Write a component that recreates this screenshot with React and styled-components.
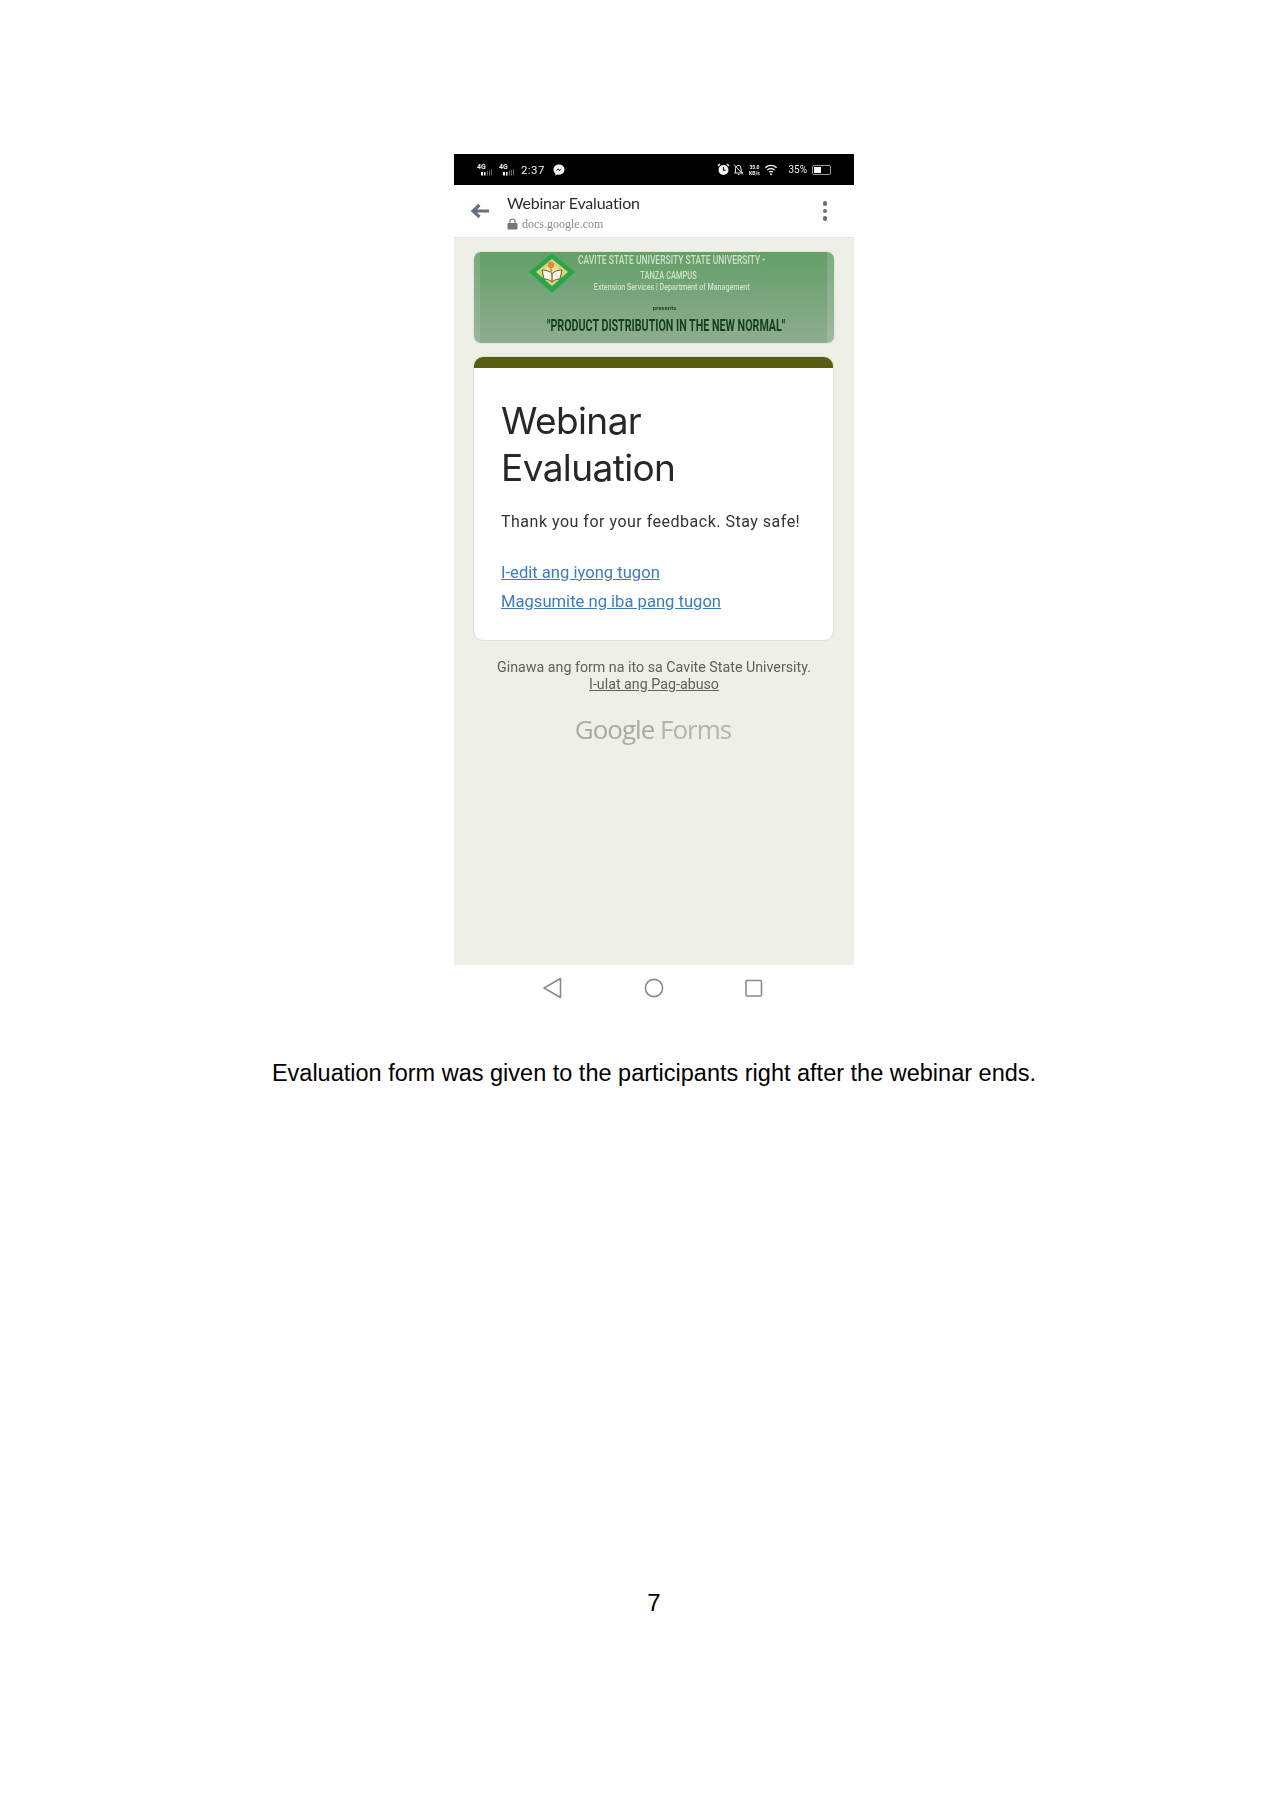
import styled, { createGlobalStyle } from "styled-components";

const GlobalStyle = createGlobalStyle`
  html, body {
    margin: 0;
    padding: 0;
    background: #fff;
  }
  * {
    box-sizing: border-box;
  }
`;

export default function App() {
  return (
    <Page>
      <GlobalStyle />
      <Phone>
        <StatusBar>
          <StatusGroup>
            <Signal />
            <Signal />
            <Clock>2:37</Clock>
            <MessengerIcon />
          </StatusGroup>
          <StatusGroupRight>
            <AlarmIcon />
            <BellOffIcon />
            <Speed>
              35.0
              <br />
              KB/s
            </Speed>
            <WifiIcon />
            <Percent>35%</Percent>
            <Battery>
              <BatteryFill />
            </Battery>
          </StatusGroupRight>
        </StatusBar>
        <AppBar>
          <BackIcon />
          <AppTitles>
            <AppTitle>Webinar Evaluation</AppTitle>
            <AppUrl>
              <LockIcon />
              docs.google.com
            </AppUrl>
          </AppTitles>
          <MenuDots>
            <Dot />
            <Dot />
            <Dot />
          </MenuDots>
        </AppBar>
        <Content>
          <Banner>
            <BannerLogo />
            <BannerLine1>CAVITE STATE UNIVERSITY STATE UNIVERSITY -</BannerLine1>
            <BannerLine2>TANZA CAMPUS</BannerLine2>
            <BannerLine3>Extension Services | Department of Management</BannerLine3>
            <BannerPresents>presents</BannerPresents>
            <BannerTitle>"PRODUCT DISTRIBUTION IN THE NEW NORMAL"</BannerTitle>
          </Banner>
          <Card>
            <CardTop />
            <CardBody>
              <Title>
                Webinar
                <br />
                Evaluation
              </Title>
              <Message>Thank you for your feedback. Stay safe!</Message>
              <CardLink>I-edit ang iyong tugon</CardLink>
              <CardLink>Magsumite ng iba pang tugon</CardLink>
            </CardBody>
          </Card>
          <Footer>
            <FooterText>Ginawa ang form na ito sa Cavite State University.</FooterText>
            <FooterLink>I-ulat ang Pag-abuso</FooterLink>
            <Brand>
              <BrandStrong>Google</BrandStrong> Forms
            </Brand>
          </Footer>
        </Content>
        <NavBar>
          <NavIcon viewBox="0 0 20 22">
            <path d="M16.5 1.500 L0 11 L16.500 20.500 Z" />
          </NavIcon>
          <NavIcon viewBox="0 0 20 22">
            <circle cx="10" cy="11" r="8.6" />
          </NavIcon>
          <NavIcon viewBox="0 0 20 22">
            <rect x="2" y="3.5" width="15.5" height="15.5" rx="1" />
          </NavIcon>
        </NavBar>
      </Phone>
      <Caption>Evaluation form was given to the participants right after the webinar ends.</Caption>
      <PageNumber>7</PageNumber>
    </Page>
  );
}

function Signal() {
  return (
    <svg width="18" height="14" viewBox="0 0 18 14">
      <text x="0" y="6" fontSize="7" fontWeight="700" fontFamily="Roboto, sans-serif" fill="#eee">
        4G
      </text>
      <rect x="4" y="9" width="2" height="3.5" fill="#fff" />
      <rect x="7" y="9" width="1.5" height="3.5" fill="#fff" />
      <rect x="10" y="8" width="1" height="4.5" fill="#666" />
      <rect x="12" y="7" width="1" height="5.5" fill="#666" />
      <rect x="14" y="6" width="1" height="6.5" fill="#666" />
    </svg>
  );
}

function MessengerIcon() {
  return (
    <svg width="12" height="12" viewBox="0 0 12 12" style={{ marginLeft: 4 }}>
      <path d="M6 .5C2.8.5.5 2.7.5 5.6c0 1.6.7 2.9 1.8 3.8v2l1.9-1c.6.2 1.2.3 1.8.3 3.2 0 5.5-2.2 5.5-5.1S9.200.5 6 .5z" fill="#f4f4f4" />
      <path d="M2.800 7 5 4.600l1.300 1.200 2.500-1.200-2.200 2.400-1.300-1.200z" fill="#111" />
    </svg>
  );
}

function AlarmIcon() {
  return (
    <svg width="13" height="13" viewBox="0 0 13 13">
      <circle cx="6.500" cy="7" r="5" fill="#f4f4f4" />
      <path d="M1 3 3 1M12 3l-2-2" stroke="#f4f4f4" strokeWidth="1.500" />
      <path d="M6.500 4v3.200h2.200" stroke="#111" strokeWidth="1.100" fill="none" />
    </svg>
  );
}

function BellOffIcon() {
  return (
    <svg width="11" height="13" viewBox="0 0 11 13" fill="none" stroke="#e8e8e8" strokeWidth="1">
      <path d="M2.500 9.500V5.500a3 3 0 0 1 5-2.300L8.500 8.500l1 1.500H1.500l1-1M5 11.500h1.500" />
      <path d="M1 1.500l9 10" />
    </svg>
  );
}

function WifiIcon() {
  return (
    <svg width="15" height="12" viewBox="0 0 14 12" fill="none" stroke="#f4f4f4" strokeWidth="1.400">
      <path d="M.8 3.800C4.200.8 8.800.8 12.200 3.800M2.800 6C5 4.200 8 4.200 10.200 6M4.700 8.100C5.800 7.200 7.200 7.200 8.300 8.100" />
      <circle cx="6.500" cy="10.300" r="1" fill="#f4f4f4" stroke="none" />
    </svg>
  );
}

function BackIcon() {
  return (
    <BackSvg width="20" height="16" viewBox="0 0 20 16" fill="none" stroke="#66717c" strokeWidth="3.200">
      <path d="M19 8H3M9.500 2 3 8l6.500 6" />
    </BackSvg>
  );
}

function LockIcon() {
  return (
    <svg width="11" height="12" viewBox="0 0 11 12">
      <path d="M3 5V3.500a2.500 2.500 0 0 1 5 0V5" fill="none" stroke="#777" strokeWidth="1.200" />
      <rect x=".5" y="5" width="10" height="6.500" rx="1" fill="#777" />
    </svg>
  );
}

function BannerLogo() {
  return (
    <LogoSvg width="48" height="42" viewBox="0 0 48 42">
      <path d="M24 1 47 20 24 41 1 20Z" fill="#2fa24e" stroke="#3fae5a" strokeWidth="1" />
      <path d="M24 7 40 20 24 34 8 20Z" fill="#d8d77a" />
      <path d="M24 11 34 20 24 29 14 20Z" fill="#e9e3a0" />
      <path d="M14 18c4 0 8 1 10 4 2-3 6-4 10-4l-2 9c-3 0-6 1-8 3-2-2-5-3-8-3z" fill="#f6f4e8" stroke="#6a5a28" strokeWidth="1" />
      <path d="M24 22v8" stroke="#6a5a28" strokeWidth="1.200" />
      <circle cx="23" cy="13" r="3.200" fill="#e28a2e" />
      <path d="M23 16v5" stroke="#d9a23a" strokeWidth="2" />
    </LogoSvg>
  );
}

const Page = styled.div`
  width: 1272px;
  height: 1800px;
  background: #fff;
  padding: 154px 0 0 36px;
  overflow: hidden;
  font-family: "Liberation Sans", Arial, sans-serif;
`;

const Phone = styled.div`
  width: 400px;
  margin: 0 auto;
  filter: blur(0.35px);
`;

const StatusBar = styled.div`
  height: 31px;
  background: #000;
  display: flex;
  align-items: center;
  justify-content: space-between;
  padding: 0 23px;
  color: #eee;
  font-family: Roboto, sans-serif;
`;

const StatusGroup = styled.div`
  display: flex;
  align-items: center;
  gap: 4px;
`;

const StatusGroupRight = styled(StatusGroup)`
  gap: 3px;
`;

const Clock = styled.span`
  font-size: 11.500px;
  letter-spacing: 0.4px;
`;

const Speed = styled.span`
  font-size: 5px;
  font-weight: 700;
  line-height: 6px;
  text-align: center;
  width: 14px;
`;

const Percent = styled.span`
  font-size: 10px;
  margin-left: 6px;
`;

const Battery = styled.div`
  width: 19px;
  height: 10px;
  border: 1px solid #999;
  border-radius: 2px;
  margin-left: 2px;
  padding: 1px;
`;

const BatteryFill = styled.div`
  width: 7px;
  height: 100%;
  background: #fff;
`;

const AppBar = styled.div`
  height: 53px;
  background: #fff;
  display: flex;
  align-items: center;
  padding: 0 27px 0 16px;
  border-bottom: 1px solid #e4e5dc;
`;

const BackSvg = styled.svg`
  margin-right: 17px;
  flex: none;
`;

const AppTitles = styled.div`
  flex: 1;
  display: flex;
  flex-direction: column;
  gap: 4px;
  padding-top: 2px;
`;

const AppTitle = styled.div`
  font-family: "Lato", sans-serif;
  font-size: 16px;
  line-height: 20px;
  color: #2b2b2b;
  letter-spacing: -0.2px;
`;

const AppUrl = styled.div`
  display: flex;
  align-items: center;
  gap: 4px;
  font-family: "Liberation Serif", serif;
  font-size: 12px;
  line-height: 14px;
  color: #8a8a8a;
`;

const MenuDots = styled.div`
  display: flex;
  flex-direction: column;
  gap: 3px;
`;

const Dot = styled.span`
  width: 4.500px;
  height: 4.500px;
  border-radius: 50%;
  background: #66717c;
`;

const Content = styled.div`
  height: 727px;
  background: #eeefe6;
  padding: 14px 20px 0;
`;

const Banner = styled.div`
  position: relative;
  height: 91px;
  border-radius: 7px;
  padding: 1px 0 0 41px;
  background:
    linear-gradient(90deg, rgba(255, 255, 255, 0.12) 0 6px, transparent 6px calc(100% - 7px), rgba(255, 255, 255, 0.15) calc(100% - 7px)),
    linear-gradient(180deg, #639f67, #8fac92);
  box-shadow: 0 0 2px rgba(0, 0, 0, 0.15);
  display: flex;
  flex-direction: column;
  align-items: center;
  font-family: Roboto, sans-serif;
`;

const LogoSvg = styled.svg`
  position: absolute;
  left: 54px;
  top: 0;
`;

const BannerLine = styled.div`
  white-space: nowrap;
  color: #cfe0cb;
`;

const BannerLine1 = styled(BannerLine)`
  font-size: 12.500px;
  font-weight: 500;
  line-height: 14px;
  transform: scaleX(0.68);
  margin-left: -5px;
`;

const BannerLine2 = styled(BannerLine)`
  font-size: 11px;
  font-weight: 500;
  line-height: 14px;
  transform: scaleX(0.68);
  margin: 2px 0 0 -12px;
`;

const BannerLine3 = styled(BannerLine)`
  font-size: 8.500px;
  font-weight: 500;
  line-height: 10px;
  transform: scaleX(0.84);
  margin: -1px 0 0 -5px;
`;

const BannerPresents = styled.div`
  font-size: 6px;
  line-height: 8px;
  margin: 12px 0 0 -20px;
  color: #26472c;
  font-weight: 700;
`;

const BannerTitle = styled.div`
  font-size: 17px;
  line-height: 20px;
  font-weight: 700;
  color: #123f1e;
  white-space: nowrap;
  transform: scaleX(0.63);
  margin: 3px 0 0 -16px;
`;

const Card = styled.div`
  margin-top: 14px;
  background: #fff;
  border-radius: 9px;
  box-shadow: 0 0 0 1px #dfe0d8;
  overflow: hidden;
  width: 359px;
`;

const CardTop = styled.div`
  height: 11px;
  background: #585d10;
`;

const CardBody = styled.div`
  padding: 29px 20px 19px 27px;
  height: 272px;
`;

const Title = styled.h1`
  margin: 0;
  font-family: Inter, sans-serif;
  font-weight: 400;
  font-size: 37px;
  line-height: 47px;
  color: #25272a;
  letter-spacing: -0.6px;
`;

const Message = styled.p`
  margin: 19px 0 0;
  font-family: Roboto, sans-serif;
  font-size: 16px;
  line-height: 24px;
  color: #333;
  letter-spacing: 0.5px;
  white-space: nowrap;
`;

const CardLink = styled.a`
  display: block;
  font-family: Roboto, sans-serif;
  font-size: 16.600px;
  line-height: 29px;
  color: #3a7dc2;
  text-decoration: underline;
  &:first-of-type {
    margin-top: 24px;
  }
`;

const Footer = styled.div`
  display: flex;
  flex-direction: column;
  align-items: center;
  margin-top: 19px;
  font-family: Roboto, sans-serif;
  font-size: 14.250px;
  line-height: 17px;
  color: #5f605c;
`;

const FooterText = styled.div``;

const FooterLink = styled.a`
  text-decoration: underline;
`;

const Brand = styled.div`
  margin: 19px 2px 0 0;
  font-family: "Open Sans", sans-serif;
  font-size: 26px;
  line-height: 34px;
  letter-spacing: -1px;
  color: #b3b4af;
`;

const BrandStrong = styled.span`
  font-weight: 500;
  color: #a9aaa6;
`;

const NavBar = styled.div`
  height: 47px;
  display: flex;
  justify-content: center;
  align-items: center;
  gap: 80px;
  padding-bottom: 1px;
`;

const NavIcon = styled.svg`
  width: 20px;
  height: 22px;
  fill: none;
  stroke: #8a8a8a;
  stroke-width: 1.600;
  stroke-linejoin: round;
  overflow: visible;
`;

const Caption = styled.p`
  margin: 46px 0 0;
  text-align: center;
  font-size: 23.500px;
  line-height: 30px;
  color: #000;
`;

const PageNumber = styled.div`
  margin-top: 500px;
  text-align: center;
  font-size: 24px;
  line-height: 30px;
  color: #000;
`;
